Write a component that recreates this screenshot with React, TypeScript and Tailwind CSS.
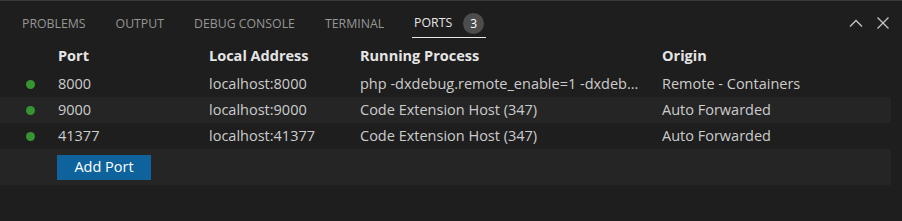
import React from 'react';

type PortRow = {
  port: string;
  address: string;
  process: string;
  origin: string;
};

const TABS = ['Problems', 'Output', 'Debug Console', 'Terminal'];

// process label is already shortened the way the panel shows it
const PORTS: PortRow[] = [
  { port: '8000', address: 'localhost:8000', process: 'php -dxdebug.remote_enable=1 -dxdeb…', origin: 'Remote - Containers' },
  { port: '9000', address: 'localhost:9000', process: 'Code Extension Host (347)', origin: 'Auto Forwarded' },
  { port: '41377', address: 'localhost:41377', process: 'Code Extension Host (347)', origin: 'Auto Forwarded' },
];

const COLS = 'grid grid-cols-[58px_151px_151px_302px_1fr] items-center';

export default function App() {
  return (
    <div
      className="w-[902px] h-[221px] bg-[#1e1e1e] border-t border-[#3a3a3a] overflow-hidden"
      style={{ fontFamily: '"Open Sans", "Noto Sans", sans-serif' }}
    >
      {/* Panel tabs */}
      <div className="flex items-start h-[44px] pt-[9px] pl-[20px] pr-[13px]">
        <div className="flex gap-[26px]">
          {TABS.map((t) => (
            <div key={t} className="h-[28px] px-[2px] flex items-center text-[12.3px] uppercase text-[#969696]">
              {t}
            </div>
          ))}
          <div className="h-[28px] px-[2px] flex items-center border-b border-[#e7e7e7] text-[12.3px] uppercase text-[#e7e7e7]">
            Ports
            <span className="ml-[11px] w-[21px] h-[21px] rounded-full bg-[#4d4d4d] text-white text-[12px] flex items-center justify-center">
              3
            </span>
          </div>
        </div>
        <div className="ml-auto flex items-center gap-[14px] h-[26px] text-[#c5c5c5]">
          <svg width="14" height="8" viewBox="0 0 14 8" fill="none" stroke="currentColor" strokeWidth="1.3">
            <polyline points="1,7.5 7,1.5 13,7.5" />
          </svg>
          <svg width="12" height="12" viewBox="0 0 12 12" fill="none" stroke="currentColor" strokeWidth="1.3">
            <line x1="0.5" y1="0.5" x2="11.5" y2="11.5" />
            <line x1="11.5" y1="0.5" x2="0.5" y2="11.5" />
          </svg>
        </div>
      </div>

      {/* Table */}
      <div className="w-[891px] text-[14.5px]">
        <div className={`${COLS} h-[26px] pb-[4px] font-bold text-[#e5e5e5]`}>
          <div />
          <div>Port</div>
          <div>Local Address</div>
          <div>Running Process</div>
          <div>Origin</div>
        </div>
        {PORTS.map((p, i) => (
          <div key={p.port} className={`${COLS} h-[26px] text-[#cccccc] ${i % 2 === 1 ? 'bg-[#252526]' : ''}`}>
            <div className="pl-[26px]">
              <div className="w-[9px] h-[9px] rounded-full bg-[#369432]" />
            </div>
            <div>{p.port}</div>
            <div>{p.address}</div>
            <div className="whitespace-nowrap">{p.process}</div>
            <div className="whitespace-nowrap">{p.origin}</div>
          </div>
        ))}
        <div className="h-[36px] bg-[#252526] pl-[57px] flex items-center">
          <button
            type="button"
            className="h-[25px] w-[94px] bg-[#0e639c] text-white text-[14.5px] flex items-center justify-center"
          >
            Add Port
          </button>
        </div>
      </div>
    </div>
  );
}
